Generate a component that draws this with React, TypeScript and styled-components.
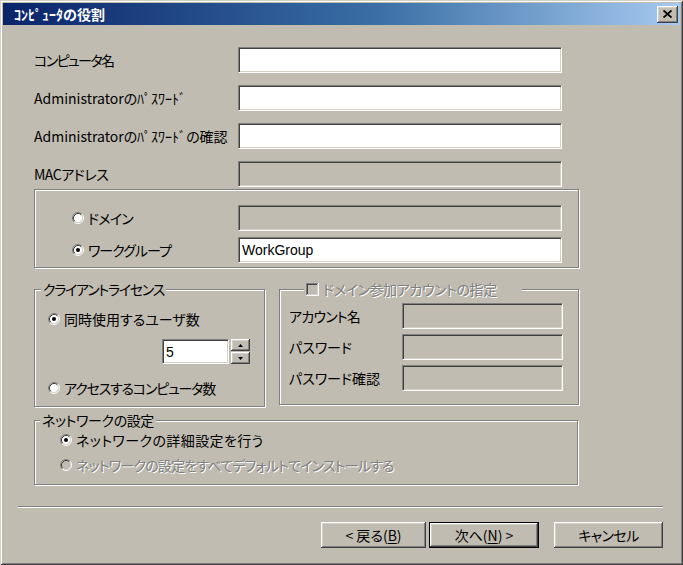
import React from 'react';
import styled, { createGlobalStyle, css } from 'styled-components';

const FACE = '#c0bcb1';
const LIGHT = '#d4d0c8';
const SHADOW = '#808080';
const DARK = '#404040';

const GlobalStyle = createGlobalStyle`
  html, body {
    margin: 0;
    padding: 0;
    background: ${FACE};
  }
  body {
    font-family: "Noto Sans CJK JP", "Liberation Sans", sans-serif;
    font-size: 14px;
    color: #000;
  }
`;

const Window = styled.div`
  width: 683px;
  height: 565px;
  box-sizing: border-box;
  padding: 3px;
  background: ${FACE};
  box-shadow: inset 1px 1px 0 ${LIGHT}, inset -1px -1px 0 ${DARK},
    inset 2px 2px 0 #fff, inset -2px -2px 0 ${SHADOW};
  display: flex;
  flex-direction: column;
`;

const TitleBar = styled.div`
  height: 23px;
  display: flex;
  align-items: center;
  justify-content: space-between;
  padding: 0 2px 0 11px;
  background: linear-gradient(90deg, #0a246a 0%, #3a6ea5 55%, #a6caf0 100%);
`;

const TitleText = styled.span`
  color: #fff;
  font-weight: bold;
  font-size: 14px;
  line-height: 16px;
`;

const raised = css`
  box-shadow: inset -1px -1px 0 ${DARK}, inset 1px 1px 0 #fff,
    inset -2px -2px 0 ${SHADOW}, inset 2px 2px 0 ${LIGHT};
`;

const CloseButton = styled.div`
  width: 21px;
  height: 17px;
  box-sizing: border-box;
  background: ${FACE};
  ${raised};
  display: flex;
  align-items: center;
  justify-content: center;
`;

const Body = styled.div`
  flex: 1;
  display: flex;
  flex-direction: column;
  padding: 22px 17px 14px 15px;
`;

const Content = styled.div`
  width: 545px;
  padding-left: 16px;
  display: flex;
  flex-direction: column;
`;

const FieldRows = styled.div`
  display: flex;
  flex-direction: column;
  gap: 12px;
`;

const FieldRow = styled.div`
  display: flex;
  align-items: center;
  height: 26px;
`;

const Label = styled.span<{ $width?: number; $disabled?: boolean; $ls?: number }>`
  ${p => p.$width && css`width: ${p.$width}px; flex: none;`}
  white-space: nowrap;
  line-height: 16px;
  font-feature-settings: "palt";
  letter-spacing: ${p => p.$ls ?? 0}px;
  ${p =>
    p.$disabled &&
    css`
      color: ${SHADOW};
      text-shadow: 1px 1px 0 #fff;
    `}
`;

const TextBox = styled.div<{ $width: number; $height?: number; $disabled?: boolean }>`
  width: ${p => p.$width}px;
  height: ${p => p.$height ?? 26}px;
  box-sizing: border-box;
  flex: none;
  background: ${p => (p.$disabled ? FACE : '#fff')};
  border: 1px solid;
  border-color: ${SHADOW} #fff #fff ${SHADOW};
  box-shadow: inset 1px 1px 0 ${DARK}, inset -1px -1px 0 ${LIGHT};
  padding: 0 3px;
  display: flex;
  align-items: center;
  font-family: "Liberation Sans", "Noto Sans CJK JP", sans-serif;
  font-size: 14px;
`;

const etched = css`
  border: 1px solid ${SHADOW};
  box-shadow: inset 1px 1px 0 #fff, 1px 1px 0 #fff;
`;

const PlainGroup = styled.div`
  ${etched};
  margin-top: 2px;
  width: 545px;
  box-sizing: border-box;
  padding: 15px 0 4px 37px;
  display: flex;
  flex-direction: column;
  gap: 6px;
`;

const Group = styled.fieldset<{ $width: number; $height?: number }>`
  ${etched};
  margin: 0;
  padding: 0;
  min-width: 0;
  width: ${p => p.$width}px;
  ${p => p.$height && css`height: ${p.$height}px;`}
  box-sizing: border-box;
`;

const GroupInner = styled.div<{ $pad: string; $gap: number }>`
  padding: ${p => p.$pad};
  display: flex;
  flex-direction: column;
  gap: ${p => p.$gap}px;
`;

const Legend = styled.legend<{ $offset: number; $padRight?: number }>`
  margin-left: ${p => p.$offset}px;
  padding: 0 ${p => p.$padRight ?? 2}px 0 2px;
  line-height: 16px;
  background: ${FACE};
  font-feature-settings: "palt";
  display: flex;
  align-items: center;
  gap: 4px;
`;

const LowerRow = styled.div`
  display: flex;
  gap: 14px;
  margin-top: 13px;
  align-items: flex-start;
`;

const ChoiceRow = styled.div<{ $width?: number }>`
  display: flex;
  align-items: center;
  height: 16px;
  gap: 4px;
  ${p => p.$width && css`width: ${p.$width}px; flex: none;`}
`;

const OptionRow = styled.div`
  display: flex;
  align-items: center;
  height: 26px;
`;

const SpinRow = styled.div`
  display: flex;
  align-items: center;
  gap: 2px;
  margin: 12px 0 0 114px;
`;

const SpinButtons = styled.div`
  display: flex;
  flex-direction: column;
  gap: 1px;
`;

const SpinButton = styled.div`
  width: 19px;
  height: 12px;
  box-sizing: border-box;
  background: ${FACE};
  ${raised};
  display: flex;
  align-items: center;
  justify-content: center;
`;

const LastChoice = styled(ChoiceRow)`
  margin-top: 16px;
`;

const NetworkGroup = styled(Group)`
  margin-top: 5px;
`;

const Separator = styled.div`
  margin-top: 21px;
  border-top: 1px solid ${SHADOW};
  border-bottom: 1px solid #fff;
`;

const ButtonRow = styled.div`
  margin-top: 14px;
  display: flex;
  justify-content: flex-end;
  align-items: center;
`;

const PushButton = styled.div<{ $width: number; $default?: boolean; $gapLeft?: number }>`
  width: ${p => p.$width}px;
  height: 26px;
  box-sizing: border-box;
  margin-left: ${p => p.$gapLeft ?? 0}px;
  background: ${FACE};
  ${raised};
  display: flex;
  align-items: center;
  justify-content: center;
  font-feature-settings: "palt";
  line-height: 16px;
  ${p =>
    p.$default &&
    css`
      border: 1px solid #000;
    `}
  u {
    text-decoration: underline;
    text-underline-offset: 2px;
  }
`;

const Radio: React.FC<{ checked?: boolean; disabled?: boolean }> = ({ checked, disabled }) => (
  <svg width="12" height="12" viewBox="0 0 12 12" style={{ flex: 'none' }}>
    <circle cx="6" cy="6" r="4.5" fill={disabled ? FACE : '#fff'} />
    <path d="M2.11 9.89 A5.5 5.5 0 0 1 9.89 2.11" fill="none" stroke={SHADOW} strokeWidth="1" />
    <path d="M9.89 2.11 A5.5 5.5 0 0 1 2.11 9.89" fill="none" stroke="#fff" strokeWidth="1" />
    <path d="M2.82 9.18 A4.5 4.5 0 0 1 9.18 2.82" fill="none" stroke={DARK} strokeWidth="1" />
    <path d="M9.18 2.82 A4.5 4.5 0 0 1 2.82 9.18" fill="none" stroke={LIGHT} strokeWidth="1" />
    {checked && <circle cx="6" cy="6" r="2" fill={disabled ? SHADOW : '#000'} />}
  </svg>
);

const Checkbox: React.FC = () => (
  <svg width="13" height="13" viewBox="0 0 13 13" style={{ flex: 'none' }}>
    <rect x="0" y="0" width="13" height="13" fill="#fff" />
    <rect x="0" y="0" width="12" height="12" fill={SHADOW} />
    <rect x="1" y="1" width="11" height="11" fill={LIGHT} />
    <rect x="1" y="1" width="10" height="10" fill={DARK} />
    <rect x="2" y="2" width="9" height="9" fill={FACE} />
  </svg>
);

const Arrow: React.FC<{ up?: boolean }> = ({ up }) => (
  <svg width="5" height="3" viewBox="0 0 5 3">
    <path d={up ? 'M2.5 0 L5 3 L0 3 Z' : 'M0 0 L5 0 L2.5 3 Z'} fill="#000" />
  </svg>
);

export default function App() {
  return (
    <>
      <GlobalStyle />
      <Window>
        <TitleBar>
          <TitleText>ｺﾝﾋﾟｭｰﾀの役割</TitleText>
          <CloseButton>
            <svg width="9" height="8" viewBox="0 0 9 8">
              <path d="M0.5 0.5 L8.5 7.5 M8.5 0.5 L0.5 7.5" stroke="#000" strokeWidth="1.8" />
            </svg>
          </CloseButton>
        </TitleBar>
        <Body>
          <Content>
            <FieldRows>
              <FieldRow>
                <Label $width={204} $ls={-1.6}>コンピュータ名</Label>
                <TextBox $width={324} />
              </FieldRow>
              <FieldRow>
                <Label $width={204}>Administratorのﾊﾟｽﾜｰﾄﾞ</Label>
                <TextBox $width={324} />
              </FieldRow>
              <FieldRow>
                <Label $width={204}>Administratorのﾊﾟｽﾜｰﾄﾞの確認</Label>
                <TextBox $width={324} />
              </FieldRow>
              <FieldRow>
                <Label $width={204} $ls={-0.5}>MACアドレス</Label>
                <TextBox $width={324} $disabled />
              </FieldRow>
            </FieldRows>

            <PlainGroup>
              <OptionRow>
                <ChoiceRow $width={166}>
                  <Radio />
                  <Label $ls={-0.8}>ドメイン</Label>
                </ChoiceRow>
                <TextBox $width={324} $disabled />
              </OptionRow>
              <OptionRow>
                <ChoiceRow $width={166}>
                  <Radio checked />
                  <Label $ls={-1}>ワークグループ</Label>
                </ChoiceRow>
                <TextBox $width={324}>WorkGroup</TextBox>
              </OptionRow>
            </PlainGroup>

            <LowerRow>
              <Group $width={231} $height={126}>
                <Legend $offset={6}>
                  <Label $ls={-1.3}>クライアントライセンス</Label>
                </Legend>
                <GroupInner $pad="14px 0 0 13px" $gap={0}>
                  <ChoiceRow>
                    <Radio checked />
                    <Label>同時使用するユーザ数</Label>
                  </ChoiceRow>
                  <SpinRow>
                    <TextBox $width={67} $height={25}>5</TextBox>
                    <SpinButtons>
                      <SpinButton>
                        <Arrow up />
                      </SpinButton>
                      <SpinButton>
                        <Arrow />
                      </SpinButton>
                    </SpinButtons>
                  </SpinRow>
                  <LastChoice>
                    <Radio />
                    <Label $ls={-1.2}>アクセスするコンピュータ数</Label>
                  </LastChoice>
                </GroupInner>
              </Group>

              <Group $width={300} $height={124}>
                <Legend $offset={24} $padRight={25}>
                  <Checkbox />
                  <Label $disabled $ls={-0.4}>
                    ドメイン参加アカウントの指定
                  </Label>
                </Legend>
                <GroupInner $pad="6px 0 0 9px" $gap={5}>
                  <OptionRow>
                    <Label $width={113} $ls={-0.8}>アカウント名</Label>
                    <TextBox $width={161} $disabled />
                  </OptionRow>
                  <OptionRow>
                    <Label $width={113}>パスワード</Label>
                    <TextBox $width={161} $disabled />
                  </OptionRow>
                  <OptionRow>
                    <Label $width={113}>パスワード確認</Label>
                    <TextBox $width={161} $disabled />
                  </OptionRow>
                </GroupInner>
              </Group>
            </LowerRow>

            <NetworkGroup $width={544} $height={73}>
              <Legend $offset={5}>
                <Label $ls={-0.4}>ネットワークの設定</Label>
              </Legend>
              <GroupInner $pad="4px 0 0 25px" $gap={9}>
                <ChoiceRow>
                  <Radio checked />
                  <Label $ls={0.4}>ネットワークの詳細設定を行う</Label>
                </ChoiceRow>
                <ChoiceRow>
                  <Radio disabled />
                  <Label $disabled $ls={-0.8}>
                    ネットワークの設定をすべてデフォルトでインストールする
                  </Label>
                </ChoiceRow>
              </GroupInner>
            </NetworkGroup>
          </Content>

          <Separator />

          <ButtonRow>
            <PushButton $width={105}>
              &lt; 戻る(<u>B</u>)
            </PushButton>
            <PushButton $width={110} $default $gapLeft={3}>
              次へ(<u>N</u>) &gt;
            </PushButton>
            <PushButton $width={109} $gapLeft={15}>
              <Label $ls={-0.6}>キャンセル</Label>
            </PushButton>
          </ButtonRow>
        </Body>
      </Window>
    </>
  );
}
